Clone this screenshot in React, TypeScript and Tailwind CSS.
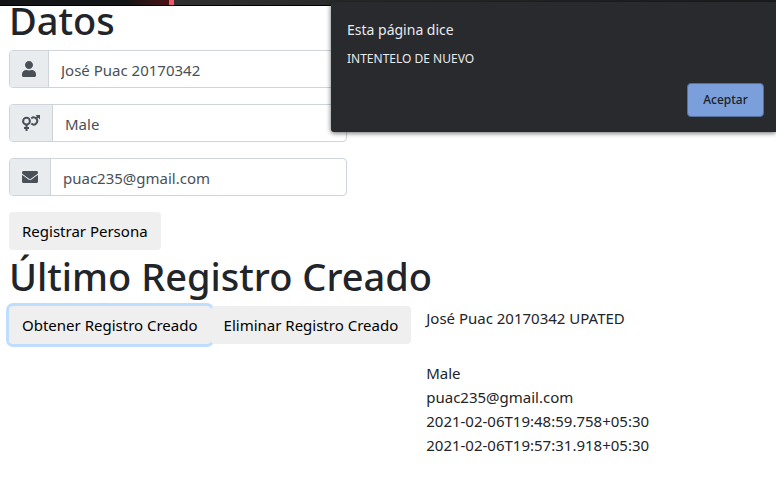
import type { ReactNode } from "react";
import { FaEnvelope, FaUser } from "react-icons/fa";

type FieldProps = {
  id: string;
  label: string;
  type?: string;
  value: string;
  icon: ReactNode;
};

function VenusMarsIcon() {
  return (
    <svg viewBox="0 0 18 16" className="h-4 w-[18px]" fill="none" stroke="currentColor" strokeWidth="2" aria-hidden="true">
      <circle cx="4.5" cy="6.2" r="3.4" />
      <path d="M4.5 9.6V16M2 13h5" />
      <path d="M9.3 3.4a3.5 3.5 0 1 1 0 5.2M14 3.5 17 0.8" />
      <path d="M13.6 0H18V4.4Z" fill="currentColor" stroke="none" />
    </svg>
  );
}

function Field({ id, label, type = "text", value, icon }: FieldProps) {
  return (
    <div className="flex h-[38px] rounded border border-[#ced4da] bg-white">
      <label
        htmlFor={id}
        aria-label={label}
        className="flex items-center rounded-l-[3px] border-r border-[#ced4da] bg-[#e9ecef] px-3 text-[#495057]"
      >
        {icon}
      </label>
      <input
        id={id}
        type={type}
        defaultValue={value}
        className="min-w-0 flex-1 rounded-r-[3px] bg-transparent px-3 pt-[2px] text-[15px] text-[#495057] outline-none"
      />
    </div>
  );
}

const button = "h-[38px] rounded bg-[#efefef] px-[13px] text-[15px] whitespace-nowrap text-black";
const heading = "mb-1 text-[38px] leading-[52px] font-medium";

export default function App() {
  return (
    <div className="relative bg-white font-['Noto_Sans',sans-serif] text-[15px] leading-6 text-[#212529]">
      <header className="relative z-10 flex h-[6px] border-b border-black bg-[#141516]">
        <div className="w-[169px] bg-linear-to-r from-[#141516] from-75% to-[#4a1015]" />
        <div className="w-[5px] bg-[#f0566c]" />
        <div className="flex-1 bg-linear-to-r from-[#303030] to-[#1c1d1f]" />
      </header>

      <main className="px-[9px]">
        <h1 className={`${heading} -mt-3`}>Datos</h1>
        <form className="flex w-[338px] flex-col items-stretch gap-4" onSubmit={(e) => e.preventDefault()}>
          <Field id="nombre" label="Nombre" value="José Puac 20170342" icon={<FaUser className="h-4 w-[14px]" />} />
          <Field id="genero" label="Género" value="Male" icon={<VenusMarsIcon />} />
          <Field
            id="correo"
            label="Correo"
            type="email"
            value="puac235@gmail.com"
            icon={<FaEnvelope className="size-4" />}
          />
          <button type="submit" className={`${button} self-start`}>
            Registrar Persona
          </button>
        </form>

        <h1 className={heading}>Último Registro Creado</h1>
        <div className="flex items-start">
          <div className="flex">
            <button type="button" className={`${button} ring-3 ring-[#bfdeff]`}>
              Obtener Registro Creado
            </button>
            <button type="button" className={button}>
              Eliminar Registro Creado
            </button>
          </div>
          <div className="ml-[15px]">
            <p className="mb-[31px]">José Puac 20170342 UPATED</p>
            <p>Male</p>
            <p>puac235@gmail.com</p>
            <p>2021-02-06T19:48:59.758+05:30</p>
            <p>2021-02-06T19:57:31.918+05:30</p>
          </div>
        </div>
      </main>

      <div
        role="alertdialog"
        aria-labelledby="aviso-titulo"
        aria-describedby="aviso-texto"
        className="absolute top-[2px] right-0 z-20 flex w-[445px] flex-col rounded-l-[3px] bg-[#292a2d] px-4 pt-4 pb-[15px] text-[#e8eaed] shadow-[0_1px_5px_rgba(0,0,0,0.6)]"
      >
        <h2 id="aviso-titulo" className="text-[14px] leading-6">
          Esta página dice
        </h2>
        <p id="aviso-texto" className="mt-2 text-[12px] leading-[18px]">
          INTENTELO DE NUEVO
        </p>
        <button
          type="button"
          className="mt-[15px] -mr-1 h-[34px] w-[77px] self-end rounded border border-[#55709d] bg-[#7b9fdb] text-[12px] font-medium text-[#202124]"
        >
          Aceptar
        </button>
      </div>
    </div>
  );
}
